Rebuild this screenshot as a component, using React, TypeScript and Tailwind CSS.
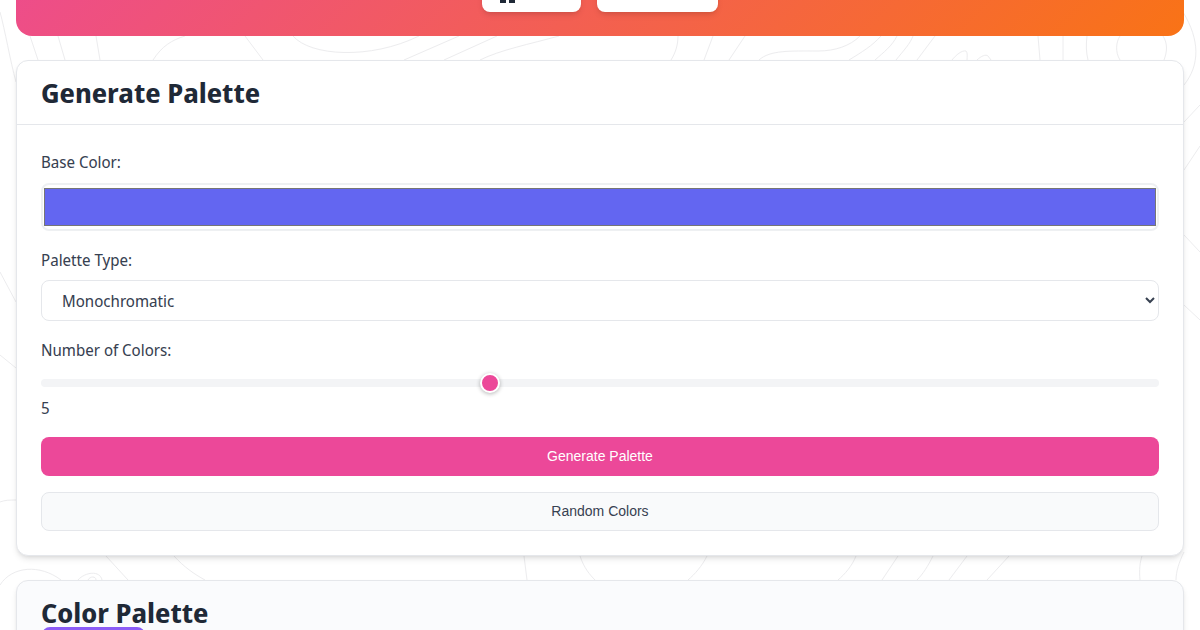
import React, { useState } from "react";

const Topography: React.FC = () => (
  <svg
    className="absolute inset-0 w-full h-full"
    viewBox="0 0 1200 630"
    fill="none"
    stroke="#ececee"
    strokeWidth="1"
  >
    {/* top gutter */}
    <path d="M0 12 C5 30 10 60 16 82" />
    <path d="M30 36 L38 60" />
    <path d="M58 36 L65 60" />
    <path d="M96 36 L100 60" />
    <path d="M153 60 C162 46 172 40 185 36" />
    <path d="M245 36 L263 60" />
    <path d="M293 36 C310 56 370 60 419 36" />
    <path d="M404 60 L459 36" />
    <path d="M444 60 L497 36" />
    <path d="M480 60 C500 50 530 44 559 36" />
    <path d="M671 60 C676 52 678 44 678 36" />
    <path d="M704 60 L713 36" />
    <path d="M729 60 L745 36" />
    <path d="M759 60 C770 50 790 51 818 51 C835 51 850 46 860 36" />
    <path d="M849 60 C862 52 872 46 881 36" />
    <path d="M875 60 C884 52 892 46 897 36" />
    <path d="M896 60 C904 50 910 44 913 36" />
    <path d="M917 60 L935 36" />
    <path d="M952 60 C956 55 962 50 966 51 C968 53 967 57 967 60" />
    <path d="M977 60 C981 56 986 54 988 56 L991 60" />
    <path d="M1040 60 L1038 36" />
    <path d="M1063 36 L1063 60" />
    <path d="M1088 60 C1086 52 1086 44 1087 36" />
    <path d="M1120 60 C1115 52 1116 42 1120 36" />
    <path d="M1163 36 C1168 44 1167 52 1164 60" />
    {/* right gutter */}
    <path d="M1184 85 C1200 65 1200 40 1183 12" />
    <path d="M1184 122 L1200 105" />
    <path d="M1184 170 L1200 146" />
    <path d="M1184 235 L1200 252" />
    <path d="M1184 305 L1200 320" />
    {/* left gutter */}
    <path d="M0 272 L16 302" />
    <path d="M0 355 L16 368" />
    <path d="M0 502 C5 500 10 500 16 500" />
    {/* gutter between the cards */}
    <path d="M106 556 L128 580" />
    <path d="M174 556 C184 567 194 574 205 580" />
    <path d="M0 585 C12 566 40 564 61 580" />
    <path d="M78 580 C85 572 100 570 102 580" />
    <path d="M88 580 C90 576 96 576 96 580" />
    <path d="M524 556 L527 580" />
    <path d="M580 556 C584 568 590 575 595 580" />
    <path d="M707 556 C702 566 695 574 688 580" />
    <path d="M856 556 C852 566 845 574 838 580" />
    <path d="M898 556 L882 580" />
    <path d="M933 556 C928 566 923 574 917 580" />
    <path d="M967 556 L949 580" />
    <path d="M1009 556 L987 580" />
    <path d="M1140 580 C1139 570 1140 562 1142 556" />
    <path d="M1176 580 C1176 572 1179 562 1184 552" />
  </svg>
);

export default function App() {
  const [count, setCount] = useState(5);
  const [paletteType, setPaletteType] = useState("monochromatic");

  return (
    <div className="relative h-[630px] overflow-hidden bg-white font-['Noto_Sans_Display','Noto_Sans',sans-serif] text-[#1f2937]">
      <Topography />

      <div className="relative flex flex-col px-4">
        {/* Header, the page is scrolled past most of it */}
        <header className="-mt-[164px] h-[200px] rounded-b-2xl bg-[linear-gradient(135deg,#ec4899,#f97316)] flex items-end justify-center gap-4 pb-6">
          <button className="w-[99px] h-10 shrink-0 rounded-lg bg-white shadow-md flex justify-start pl-[18px] pt-[25px]">
            <span className="flex gap-[3px]">
              <span className="w-[6px] h-[6px] bg-[#1f2937]" />
              <span className="w-[6px] h-[6px] bg-[#1f2937]" />
            </span>
          </button>
          <button className="w-[121px] h-10 shrink-0 rounded-lg bg-white shadow-md" />
        </header>

        {/* Generate card */}
        <section className="mt-6 rounded-xl border border-[#e5e7eb] bg-white shadow-md">
          <div className="h-[64px] border-b border-[#e5e7eb] px-6 flex items-center">
            <h2 className="text-[27px] font-bold leading-none">Generate Palette</h2>
          </div>
          <div className="px-6 pt-[25px]">
            <label className="block text-[16px] leading-6 text-[#374151]">Base Color:</label>
            <div className="mt-[9px] h-12 rounded-lg border-2 border-[#eef0f2] px-[1px] py-[3px]">
              <div className="h-[38px] w-full border border-[#767676] bg-[#6366f1]" />
            </div>

            <label className="mt-[17px] block text-[16px] leading-6 text-[#374151]">Palette Type:</label>
            <select
              value={paletteType}
              onChange={(e) => setPaletteType(e.target.value)}
              className="mt-[8px] block h-[41px] w-full rounded-lg border border-[#e5e7eb] bg-white px-4 text-[16px] text-[#374151]"
            >
              <option value="monochromatic">Monochromatic</option>
              <option value="analogous">Analogous</option>
              <option value="complementary">Complementary</option>
              <option value="triadic">Triadic</option>
            </select>

            <label className="mt-[17px] block text-[16px] leading-6 text-[#374151]">Number of Colors:</label>
            <input
              type="range"
              min={3}
              max={8}
              value={count}
              onChange={(e) => setCount(Number(e.target.value))}
              className="mt-[17px] block h-2 w-full appearance-none rounded bg-[#f3f4f6] [&::-webkit-slider-thumb]:h-5 [&::-webkit-slider-thumb]:w-5 [&::-webkit-slider-thumb]:appearance-none [&::-webkit-slider-thumb]:rounded-full [&::-webkit-slider-thumb]:border-2 [&::-webkit-slider-thumb]:border-white [&::-webkit-slider-thumb]:bg-[#ec4899] [&::-webkit-slider-thumb]:shadow-[0_1px_4px_rgba(0,0,0,0.3)]"
            />
            <div className="mt-[9px] text-[16px] leading-6 text-[#374151]">{count}</div>

            <button className="mt-[17px] block h-[39px] w-full rounded-lg bg-[#ec4899] font-['Liberation_Sans',sans-serif] text-[14px] text-white">
              Generate Palette
            </button>
            <button className="mt-4 block h-[39px] w-full rounded-lg border border-[#e5e7eb] bg-[#f9fafb] font-['Liberation_Sans',sans-serif] text-[14px] text-[#374151]">
              Random Colors
            </button>
            <div className="h-6" />
          </div>
        </section>

        {/* Color palette card */}
        <section className="mt-6 h-[200px] rounded-xl border border-[#e5e7eb] bg-[#fafbfd] px-6 pt-[13px] shadow-md">
          <h2 className="text-[27px] font-bold leading-[38px]">Color Palette</h2>
          <div className="ml-[1px] -mt-[5px] h-6 w-[103px] rounded-lg bg-[#8b5cf6]" />
        </section>
      </div>
    </div>
  );
}
